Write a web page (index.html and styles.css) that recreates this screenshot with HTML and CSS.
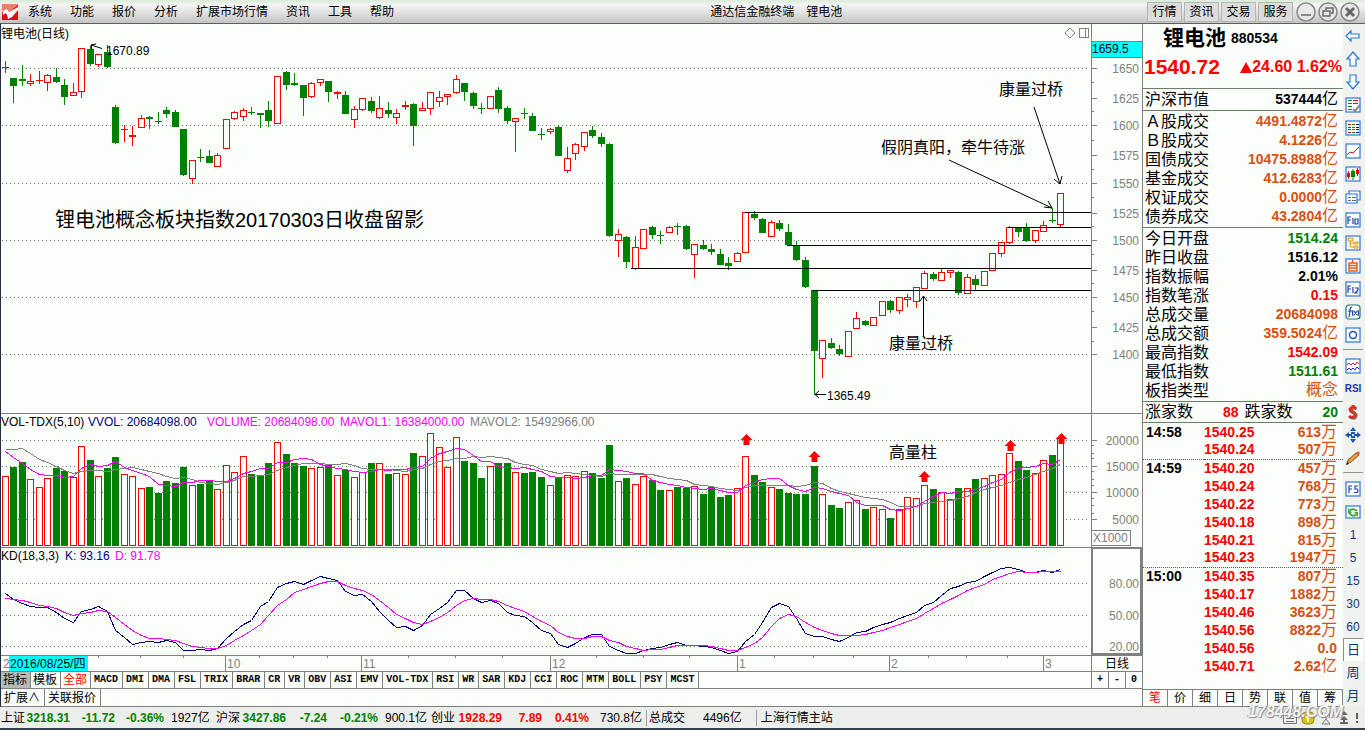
FILE: index.html
```html
<!DOCTYPE html>
<html lang="zh-CN">
<head>
<meta charset="utf-8">
<title>通达信金融终端 锂电池</title>
<link rel="stylesheet" href="styles.css">
</head>
<body>
<header class="menubar">
  <svg class="logo" width="16" height="16" viewBox="0 0 16 16"><rect width="16" height="16" fill="#e8836c"/><path d="M0 9L5 5L7 8L16 1V16H0Z" fill="#e01010"/><path d="M1 7L5 5L7 8L16 3V6L10 13L6 15L5 10L1 12Z" fill="#fff"/><path d="M1 11L4 9V15H1Z" fill="#e01010"/></svg>
  <nav class="menu">
    <button>系统</button><button>功能</button><button>报价</button><button>分析</button><button>扩展市场行情</button><button>资讯</button><button>工具</button><button>帮助</button>
  </nav>
  <div class="app-title"><span>通达信金融终端</span><span>锂电池</span></div>
  <div class="top-buttons"><button>行情</button><button>资讯</button><button>交易</button><button>服务</button></div>
  <div class="window-buttons">
    <button aria-label="最小化"><svg width="20" height="20" viewBox="0 0 20 20"><circle cx="10" cy="10" r="9" class="ring"/><path d="M5 13H15" class="mark"/></svg></button>
    <button aria-label="还原"><svg width="20" height="20" viewBox="0 0 20 20"><circle cx="10" cy="10" r="9" class="ring"/><path d="M8 8V6H15V11H13M5 9H12V14H5Z" class="mark"/></svg></button>
    <button aria-label="关闭"><svg width="20" height="20" viewBox="0 0 20 20"><circle cx="10" cy="10" r="9" class="ring"/><path d="M6 6L14 14M14 6L6 14" class="mark cross"/></svg></button>
  </div>
</header>

<main class="workspace">
  <section class="charts">
    <div class="pane pane-price">
      <svg class="plot" id="price"><g transform="translate(-1,-24)">
        <g id="price-grid"></g>
        <text x="1" y="38">锂电池(日线)</text>
        <path class="tool" d="M1070 28L1075 33L1070 38L1065 33Z"/>
        <path class="tool crisp" d="M1079.5 28.5H1088.5V37.5H1079.5ZM1085.5 28V38"/>
        <g id="candles"></g>
        <path class="ray" d="M745 212.5H1092M1008 227.5H1092M787 245.5H1092M631 268.5H1092M813 290.5H1092"/>
        <path class="arrow" d="M102 48.5L91 45M96 44L91 45L92 50"/>
        <text x="106" y="55">1670.89</text>
        <path class="arrow" d="M826 394.5H815M819 391L815 394.5L819 398"/>
        <text x="827" y="400">1365.49</text>
        <path class="arrow" d="M1034 107L1060 184M1054 179L1060 184L1062 176"/>
        <path class="arrow" d="M949 160L1052 208M1048 201L1052 208L1044 207"/>
        <path class="arrow" d="M923.5 337V296M920 301L923.5 296L927 301"/>
        <text class="note" x="999" y="95">康量过桥</text>
        <text class="note" x="881" y="153">假阴真阳，牵牛待涨</text>
        <text class="note" x="889" y="349">康量过桥</text>
        <text class="headline" x="55" y="227">锂电池概念板块指数20170303日收盘留影</text>
      </g></svg>
      <svg class="axis" id="price-axis"><g transform="translate(-1091,-24)">
        <path d="M1091.5 24V414" class="frame"/>
        <rect x="1092" y="41" width="50" height="16" fill="#00ffff"/><path d="M1092 41.5H1142M1092 57.5H1142" class="frame"/>
        <text x="1092" y="53" class="dark">1659.5</text>
        <g id="price-ticks"></g>
      </g></svg>
    </div>
    <div class="pane pane-volume">
      <svg class="plot" id="volume"><g transform="translate(-1,-414)">
        <g id="volume-grid"></g>
        <text x="1" y="426">VOL-TDX(5,10)</text><text x="88" y="426" class="navy">VVOL: 20684098.00</text><text x="207" y="426" class="magenta">VOLUME: 20684098.00</text><text x="340" y="426" class="magenta">MAVOL1: 16384000.00</text><text x="470" y="426" class="grey">MAVOL2: 15492966.00</text>
        <g id="bars"></g>
        <g id="volume-lines"></g>
        <g id="flags"></g>
        <text class="note" x="889" y="458">高量柱</text>
      </g></svg>
      <svg class="axis"><g transform="translate(-1091,-414)">
        <path d="M1091.5 414V547M1092 530.5H1130.5V545.5H1092" class="frame"/>
        <g id="volume-ticks"></g>
        <text x="1093" y="542">X1000</text>
      </g></svg>
    </div>
    <div class="pane pane-kd">
      <svg class="plot" id="kd"><g transform="translate(-1,-548)">
        <g id="kd-grid"></g>
        <text x="1" y="560">KD(18,3,3)</text><text x="65" y="560" class="navy">K: 93.16</text><text x="115" y="560" class="magenta">D: 91.78</text>
        <g id="kd-lines"></g>
      </g></svg>
      <svg class="axis"><g transform="translate(-1091,-548)">
        <rect x="1092" y="548" width="49" height="106" fill="none" stroke="#808080" stroke-width="2"/>
        <g id="kd-ticks"></g>
      </g></svg>
    </div>
    <div class="pane pane-dates">
      <svg class="plot"><g transform="translate(-1,-656)">
        <text x="3" y="668" class="grey">2</text>
        <rect x="9" y="656" width="79" height="15" fill="#00ffff"/><text x="10" y="668">2016/08/25/四</text>
        <g id="months"></g>
      </g></svg>
      <button class="period">日线</button>
    </div>
    <div class="tabs tabs-indicator">
      <button class="cn selected">指标</button><button class="cn">模板</button><button class="cn hot">全部</button><button>MACD</button><button>DMI</button><button>DMA</button><button>FSL</button><button>TRIX</button><button>BRAR</button><button>CR</button><button>VR</button><button>OBV</button><button>ASI</button><button>EMV</button><button>VOL-TDX</button><button>RSI</button><button>WR</button><button>SAR</button><button>KDJ</button><button>CCI</button><button>ROC</button><button>MTM</button><button>BOLL</button><button>PSY</button><button>MCST</button>
      <span class="zoomers"><button>+</button><button>-</button><button>0</button></span>
    </div>
    <div class="tabs tabs-extra"><button class="cn">扩展∧</button><button class="cn">关联报价</button></div>
  </section>

  <aside class="quote">
    <div class="quote-head">
      <h1><span class="name">锂电池</span><span class="code">880534</span></h1>
      <p><span class="last">1540.72</span><span class="change"><svg width="12" height="11" viewBox="0 0 12 11"><path d="M6 0L12 11H0Z" fill="#f00"/></svg>24.60 1.62%</span></p>
    </div>
    <table class="facts single"><tr><th>沪深市值</th><td>537444<i>亿</i></td></tr></table>
    <table class="facts">
      <tr><th>Ａ股成交</th><td class="orange">4491.4872<i>亿</i></td></tr>
      <tr><th>Ｂ股成交</th><td class="orange">4.1226<i>亿</i></td></tr>
      <tr><th>国债成交</th><td class="orange">10475.8988<i>亿</i></td></tr>
      <tr><th>基金成交</th><td class="orange">412.6283<i>亿</i></td></tr>
      <tr><th>权证成交</th><td class="orange">0.0000<i>亿</i></td></tr>
      <tr><th>债券成交</th><td class="orange">43.2804<i>亿</i></td></tr>
    </table>
    <table class="facts">
      <tr><th>今日开盘</th><td class="green">1514.24</td></tr>
      <tr><th>昨日收盘</th><td>1516.12</td></tr>
      <tr><th>指数振幅</th><td>2.01%</td></tr>
      <tr><th>指数笔涨</th><td class="red">0.15</td></tr>
      <tr><th>总成交量</th><td class="orange">20684098</td></tr>
      <tr><th>总成交额</th><td class="orange">359.5024<i>亿</i></td></tr>
      <tr><th>最高指数</th><td class="red">1542.09</td></tr>
      <tr><th>最低指数</th><td class="green">1511.61</td></tr>
      <tr><th>板指类型</th><td class="orange"><i>概念</i></td></tr>
    </table>
    <div class="breadth"><span>涨家数</span><b class="red">88</b><span>跌家数</span><b class="green">20</b></div>
    <table class="ticks">
      <tr><td>14:58</td><td>1540.25</td><td>613<i>万</i></td></tr>
      <tr><td></td><td>1540.24</td><td>507<i>万</i></td></tr>
      <tr class="minute"><td>14:59</td><td>1540.20</td><td>457<i>万</i></td></tr>
      <tr><td></td><td>1540.24</td><td>768<i>万</i></td></tr>
      <tr><td></td><td>1540.22</td><td>773<i>万</i></td></tr>
      <tr><td></td><td>1540.18</td><td>898<i>万</i></td></tr>
      <tr><td></td><td>1540.21</td><td>815<i>万</i></td></tr>
      <tr><td></td><td>1540.23</td><td>1947<i>万</i></td></tr>
      <tr class="minute"><td>15:00</td><td>1540.35</td><td>807<i>万</i></td></tr>
      <tr><td></td><td>1540.17</td><td>1882<i>万</i></td></tr>
      <tr><td></td><td>1540.46</td><td>3623<i>万</i></td></tr>
      <tr><td></td><td>1540.56</td><td>8822<i>万</i></td></tr>
      <tr><td></td><td>1540.56</td><td>0.0</td></tr>
      <tr><td></td><td>1540.71</td><td>2.62<i>亿</i></td></tr>
    </table>
    <div class="quote-tabs"><button class="hot">笔</button><button>价</button><button>细</button><button>日</button><button>势</button><button>联</button><button>值</button><button>筹</button></div>
  </aside>

  <nav class="toolbar">
    <button aria-label="后退"><svg viewBox="0 0 16 16"><path class="hollow" d="M1 8L6 3V6H14V10H6V13Z"/></svg></button>
    <button aria-label="上"><svg viewBox="0 0 16 16"><path class="hollow" d="M8 1L14 8H11V15H5V8H2Z"/></svg></button>
    <button aria-label="下"><svg viewBox="0 0 16 16"><path class="hollow" d="M8 15L2 8H5V1H11V8H14Z"/></svg></button>
    <button aria-label="自选报价"><svg viewBox="0 0 16 16"><rect class="box" x="1" y="1" width="14" height="14"/><path stroke="#080" d="M3 3.5H7M3 6.5H7M3 9.5H7M3 12.5H7"/><path stroke="#e00" d="M8 3.5H13M8 6.5H13"/><path stroke="#888" stroke-width="2" fill="none" d="M8 12L10 14L15 8"/></svg></button>
    <button aria-label="行情表"><svg viewBox="0 0 16 16"><rect class="box" x="1" y="1" width="14" height="14"/><path stroke="#e00" d="M3 4.5H6M3 7.5H6M3 9.5H6M3 12.5H6"/><path stroke="#080" d="M7 4.5H10M7 7.5H10M7 9.5H10M7 12.5H10"/><path stroke="#00d" d="M11 4.5H14M11 7.5H14M11 9.5H14M11 12.5H14"/></svg></button>
    <button aria-label="分时"><svg viewBox="0 0 16 16"><rect class="box" x="1" y="1" width="14" height="14"/><path fill="none" stroke="#e00" d="M2 12L5 9L8 10L11 7L14 4"/></svg></button>
    <button aria-label="K线"><svg viewBox="0 0 16 16"><rect class="box" x="1" y="1" width="14" height="14"/><path fill="#e00" d="M2 7H5V11H2ZM11 4H14V8H11ZM3 5H4V13H3ZM12 2H13V10H12Z"/><path fill="#080" d="M6 5H10V11H6ZM7.5 3H8.5V14H7.5Z"/></svg></button>
    <button aria-label="多窗口"><svg viewBox="0 0 16 16"><path class="box" d="M4 5V2H15V11H12M1 5H12V14H1Z"/><path stroke="#666" d="M3 8.5H6M7 8.5H11M3 11.5H6M7 11.5H11"/></svg></button>
    <button aria-label="F10"><svg viewBox="0 0 16 16"><rect class="box" x="1" y="1" width="14" height="14"/><path class="fn" d="M3 12V5H6M3 8H6M8 6V12M10 7H13V12H10Z"/></svg></button>
    <button aria-label="板块树"><svg viewBox="0 0 16 16"><rect class="box" x="1" y="1" width="14" height="14"/><path fill="#fff2a0" stroke="#d89820" d="M3 3H8V6H3ZM9 7H13V9H9ZM9 11H13V13H9ZM5 6V12H9M5 8H9"/></svg></button>
    <button aria-label="自选股"><svg viewBox="0 0 16 16"><rect class="box" x="1" y="1" width="14" height="14"/><path fill="none" stroke="#e06020" stroke-width="1.5" d="M4 5H12V13H4ZM4 7.5H12M4 10H12M8 2L7 5"/></svg></button>
    <button aria-label="F12"><svg viewBox="0 0 16 16"><rect class="box" x="1" y="1" width="14" height="14"/><path class="fn" d="M3 12V5H6M3 8H6M8 6V12M10 7H13V9L10 12H13"/></svg></button>
    <button aria-label="公式"><svg viewBox="0 0 16 16"><rect class="box teal" x="1" y="1" width="14" height="14" rx="3"/><path class="fn" d="M7 3C5 3 5 5 5 7L4 13M3 7H7M8 6Q7 9 8 12M9 7L12 11M12 7L9 11M13 6Q14 9 13 12"/></svg></button>
    <button aria-label="周期"><svg viewBox="0 0 16 16"><rect class="box" x="1" y="1" width="14" height="14"/><circle cx="8" cy="8" r="3.5" fill="none" stroke="#1850c0" stroke-width="1.4"/></svg></button>
    <hr>
    <button aria-label="叠加"><svg viewBox="0 0 16 16"><rect class="box" x="1" y="1" width="14" height="14"/><path fill="none" stroke="#d22" d="M2 7L4 5L6 7L8 5L10 7L12 4L14 6"/><path fill="none" stroke="#22d" d="M2 12L4 10L6 12L8 10L10 12L12 9L14 11"/></svg></button>
    <button class="rsi">RSI</button>
    <button aria-label="资金"><svg viewBox="0 0 16 16"><path fill="none" stroke="#888" stroke-width="3" d="M12 5Q8 3 6 6Q6 8 9 9Q13 11 10 14Q7 15 5 13"/><path fill="none" stroke="#d43020" stroke-width="3" d="M11 4Q7 2 5 5Q5 7 8 8Q12 10 9 13Q6 14 4 12M8 1V4"/></svg></button>
    <button aria-label="移动"><svg viewBox="0 0 16 16"><path fill="#1858b8" d="M8 0L11 4H5ZM8 16L5 12H11ZM0 8L4 5V11ZM16 8L12 11V5ZM6 5H10V7H12V9H10V11H6V9H4V7H6Z"/><path fill="#fff" d="M7 7H9V9H7Z"/></svg></button>
    <button aria-label="画线"><svg viewBox="0 0 16 16"><path fill="#e8a040" stroke="#805018" d="M2 14L3 10L11 3L14 5L6 12Z"/><path fill="#e06050" d="M11 3L13 1L15 3L14 5Z"/><path fill="#222" d="M1 15L2 12L4 14Z"/></svg></button>
    <hr>
    <button aria-label="F5"><svg viewBox="0 0 16 16"><rect class="box" x="1" y="1" width="14" height="14"/><path class="fn" d="M4 12V5H7M4 8H7M13 5H10V8H12Q14 10 12 11.5H9"/></svg></button>
    <button aria-label="刷新"><svg viewBox="0 0 16 16"><rect class="box" x="1" y="2" width="14" height="12"/><path fill="none" stroke="#40a840" stroke-width="2" d="M12 7Q9 4 5 6M4 9Q7 13 11 11"/><path fill="#40a840" d="M3 4V9H7ZM13 13V8H9Z"/></svg></button>
    <button>1</button><button>5</button><button>15</button><button>30</button><button>60</button><button class="cn active">日</button><button class="cn">周</button><button class="cn">月</button>
  </nav>
</main>

<footer class="status">
  <div class="index sh down"><span>上证</span><b>3218.31</b><b>-11.72</b><b>-0.36%</b><span>1927亿</span></div>
  <div class="index hs down"><span>沪深</span><b>3427.86</b><b>-7.24</b><b>-0.21%</b><span>900.1亿</span></div>
  <div class="index cy up"><span>创业</span><b>1928.29</b><b>7.89</b><b>0.41%</b><span>730.8亿</span></div>
  <div class="total"><span>总成交</span><span>4496亿</span></div>
  <div class="host">上海行情主站</div>
  <div class="tray">
    <svg width="80" height="16" viewBox="0 0 80 16"><path fill="#eee" stroke="#777" d="M.5 2.5H13.5V13.5H.5ZM3 5.5H11M3 8.5H11M3 11.5H11"/><rect x="19" y="2" width="12" height="12" rx="4" fill="#d8c020" stroke="#988810"/><path fill="#fff8a0" d="M25 4L29 8H26V12H24V8H21Z"/><path fill="none" stroke="#777" d="M43 5V9L39 14H47L43 9M40 2Q38 5 40 8M46 2Q48 5 46 8"/><path fill="#666" d="M61 1L65 5H57ZM61 6L65 10H57ZM60 10H62V12H65V14H57V12H60ZM73 3H75V9H73ZM73 11H75V13H73Z"/></svg>
    <span class="stamp">178448.COM</span>
  </div>
</footer>
<script src="chart.js"></script>
</body>
</html>
```

FILE: styles.css
```css
* { box-sizing: border-box; }
body {
  margin: 0;
  min-height: 100vh;
  display: flex;
  flex-direction: column;
  background: #fcfefc;
  color: #000;
  font: 12px/16px "Liberation Sans", "Noto Sans CJK SC", sans-serif;
}
button {
  margin: 0;
  padding: 0;
  border: 0;
  background: none;
  color: inherit;
  font: inherit;
  white-space: nowrap;
}
svg { display: block; flex: none; }

/* menu bar */
.menubar {
  display: flex;
  align-items: center;
  height: 24px;
  padding-left: 2px;
  border-bottom: 1px solid #605c60;
  background: linear-gradient(#d8ecd8, #f4f4f4 20%, #e4e4e4 50%, #c4c4c4);
}
.menu { display: flex; gap: 18px; margin-left: 10px; }
.app-title { display: flex; gap: 12px; margin: 0 auto 0 316px; }
.top-buttons { display: flex; gap: 2px; }
.top-buttons button {
  width: 35px;
  height: 20px;
  border: 1px solid #b4b4b4;
  background: #dcdcdc;
}
.window-buttons { display: flex; gap: 2px; padding: 0 5px 0 3px; }
.ring { fill: #e8e8e8; stroke: #888; stroke-width: 1.5; }
.mark { fill: none; stroke: #666; stroke-width: 1.5; }
.cross { stroke-width: 3; }

/* workspace */
.workspace { flex: 1; display: flex; }
.charts {
  flex: 1;
  min-width: 0;
  display: flex;
  flex-direction: column;
  border-left: 1px solid #203040;
}
.pane { display: flex; border-bottom: 1px solid #808080; }
.pane-price { flex: 1; min-height: 390px; }
.pane-volume { height: 134px; }
.pane-kd { height: 108px; }
.pane-dates { height: 16px; }
.plot { flex: 1; min-width: 0; height: 100%; overflow: hidden; }
.axis { width: 51px; height: 100%; }
.axis text, .grey { fill: #808080; }
.axis .dark { fill: #000; }
.navy { fill: #000080; }
.magenta { fill: #ff00ff; }
.crisp, .frame, .ray, .grid, .body, .wick { shape-rendering: crispEdges; }
.frame { fill: none; stroke: #808080; }
.tool { fill: none; stroke: #808080; }
.ray { stroke: #000; }
.grid { stroke: #688068; stroke-dasharray: 1 3; }
.arrow { fill: none; stroke: #000; }
.note { font-size: 16px; }
.headline { font-size: 20px; }
.up-bar { fill: #fcfefc; stroke: #f00; }
.down-bar { fill: #008000; stroke: #008000; }
.line { fill: none; stroke-width: 1; }
.flag { fill: #f00; }
.period { width: 51px; border-left: 1px solid #808080; }
.tabs { display: flex; border-bottom: 1px solid #808080; }
.tabs-indicator { height: 17px; font: bold 10px/16px "Liberation Mono", monospace; }
.tabs-extra { height: 18px; }
.tabs button { padding: 0 4px 0 3px; border-right: 1px solid #808080; }
.tabs .cn {
  padding: 0 3px 0 2px;
  font: 12px/16px "Liberation Sans", "Noto Sans CJK SC", sans-serif;
}
.tabs .selected { background: #b8b8b8; }
.tabs-extra .cn { padding: 0 4px 0 3px; }
.hot { color: #f00; }
.zoomers { display: flex; width: 51px; margin-left: auto; border-left: 1px solid #808080; }
.zoomers button { flex: 1; padding: 0; }
.zoomers button:last-child { border: 0; }

/* quote panel */
.quote {
  flex: none;
  width: 201px;
  display: flex;
  flex-direction: column;
  border-left: 1px solid #808080;
  border-bottom: 1px solid #808080;
}
.quote-head { height: 65px; border-bottom: 1px solid #688068; white-space: nowrap; }
.quote-head h1 {
  display: flex;
  align-items: center;
  gap: 5px;
  margin: 0;
  padding-left: 20px;
  line-height: 28px;
}
.name { font-size: 21px; font-weight: bold; }
.code { font-size: 14px; }
.quote-head p {
  display: flex;
  align-items: center;
  justify-content: space-between;
  margin: 2px 0 0;
  padding: 0 1px;
  color: #f00;
  font-weight: bold;
  line-height: 26px;
}
.last { font-size: 21px; }
.change { display: flex; align-items: center; font-size: 16px; }
.facts, .ticks { width: 100%; border-collapse: collapse; font-size: 14px; }
.facts { display: block; padding: 1px 0; border-bottom: 1px solid #688068; }
.facts tbody { display: block; }
.facts tr { display: flex; justify-content: space-between; padding: 0 5px 0 2px; }
.facts th, .facts td { padding: 0; line-height: 19px; white-space: nowrap; }
.facts th { font-size: 16px; font-weight: normal; }
.facts td, .ticks td { font-weight: bold; }
i { font-size: 16px; font-style: normal; font-weight: normal; line-height: 16px; }
.red { color: #f00; }
.green { color: #008000; }
.orange { color: #d85010; }
.breadth {
  display: flex;
  justify-content: space-between;
  padding: 0 5px 0 2px;
  border-bottom: 1px solid #688068;
  font-size: 16px;
  line-height: 20px;
}
.breadth b { font-size: 14px; }
.breadth .red { margin-left: 24px; }
.breadth .green { margin-left: 24px; }
.ticks td { height: 18px; padding: 0; line-height: 17px; white-space: nowrap; }
.ticks td:first-child { width: 61px; padding-left: 3px; }
.ticks td:nth-child(2) { color: #f00; }
.ticks td:last-child { padding-right: 6px; color: #d85010; text-align: right; }
.minute { border-top: 1px dotted #506050; }
.quote-tabs { display: flex; height: 17px; margin-top: auto; border-top: 1px solid #808080; }
.quote-tabs button { flex: 1; border-right: 1px solid #808080; line-height: 16px; }

/* right toolbar */
.toolbar {
  flex: none;
  width: 22px;
  display: flex;
  flex-direction: column;
  background: #f0f2f0;
}
.toolbar button {
  display: flex;
  align-items: center;
  justify-content: center;
  width: 20px;
  height: 23px;
  color: #103878;
}
.toolbar svg { width: 16px; height: 16px; }
.toolbar hr { width: 20px; margin: 3px 0 4px; border: 0; border-top: 1px solid #909090; }
.toolbar .rsi { color: #2038b0; font-size: 10px; font-weight: bold; }
.toolbar .cn { font-size: 13px; }
.toolbar .active { border: 1px solid #909090; border-width: 1px 0 0 1px; background: #fcfefc; }
.hollow { fill: #fff; stroke: #2878d8; stroke-width: 1.2; }
.box { fill: #fff; stroke: #2878d8; stroke-width: 1.2; }
.teal { stroke: #187078; }
.fn { fill: none; stroke: #1840b0; stroke-width: 1.2; }

/* status bar */
.status {
  display: flex;
  align-items: center;
  height: 23px;
  border-bottom: 2px solid #304050;
  background: #eceeec;
  white-space: nowrap;
}
.index { display: grid; padding-left: 1px; }
.sh { grid-template-columns: 24px 45px 45px 49px 51px; }
.hs { grid-template-columns: 24px 46px 41px 51px 52px; }
.cy { grid-template-columns: 24px 47px 40px 47px 57px; }
.index b { text-align: right; }
.index span:last-child { padding-left: 7px; }
.cy span:last-child { padding-left: 11px; }
.down b { color: #008000; }
.up b { color: #f00; }
.total { display: flex; gap: 18px; padding: 0 14px 0 2px; border-left: 1px solid #a0a0a0; }
.host { padding-left: 4px; border-left: 1px solid #a0a0a0; }
.tray { position: relative; margin-left: auto; padding-right: 2px; }
.stamp {
  position: absolute;
  right: 22px;
  bottom: 3px;
  color: #f4f4f4;
  font: italic bold 16px/22px "Liberation Sans", sans-serif;
  text-shadow: 1px 1px 1px #888, -1px 0 1px #aaa;
}
```

FILE: chart.js
```js
const NS = 'http://www.w3.org/2000/svg';
const STEP = 8.516;

// one candle per row: direction, high, top, bottom, low, volume top
const CANDLES = `
r 61 67 67 72 476;g 78 78 85 102 467;g 65 79 80 85 462;r 74 81 83 85 479;r 71 80 80 83 487
r 74 75 82 90 478;g 68 77 81 82 468;g 79 85 96 104 471;r 83 92 95 95 477;r 48 48 91 97 446
g 46 49 63 65 460;r 54 54 64 66 476;g 45 52 66 67 468;g 105 107 142 143 457;r 125 129 129 141 474
r 126 135 136 145 476;r 115 118 127 127 488;g 116 117 118 128 487;g 112 121 121 123 493;g 107 110 113 117 481
g 110 112 126 126 483;g 129 129 174 175 467;r 160 160 178 183 485;g 149 157 157 161 484;g 150 156 162 162 481
r 153 155 166 166 489;r 119 119 148 148 465;r 111 112 118 119 472;r 108 110 116 120 456;g 107 112 112 114 474
g 113 113 114 127 475;g 101 110 120 126 463;r 76 76 123 123 442;g 71 72 84 89 454;g 73 83 84 85 463
g 85 85 97 115 466;r 82 83 96 97 468;r 79 79 82 85 467;g 81 81 91 101 464;r 91 92 93 98 475
g 91 95 113 113 470;r 106 109 119 127 477;r 98 98 109 110 472;g 97 101 110 112 463;r 96 108 117 118 463
g 102 110 113 117 474;r 109 113 117 123 473;r 101 105 106 109 474;g 103 104 125 145 453;r 102 108 110 110 456
r 92 92 108 114 433;r 91 97 101 106 447;r 94 94 96 104 467;r 75 79 92 93 437;g 83 83 91 100 461
g 92 93 105 108 463;g 103 108 108 113 478;r 96 96 108 108 466;g 87 90 108 112 463;g 106 108 120 123 463
r 118 118 121 151 472;g 108 113 113 118 473;g 113 116 130 130 472;g 128 134 134 139 477;r 128 129 131 133 485
g 125 127 155 155 478;r 147 158 170 172 475;r 143 144 153 159 476;r 132 132 146 150 471;g 126 130 135 137 473
g 133 137 143 146 478;g 143 144 235 236 445;r 229 234 240 256 481;g 236 237 261 267 478;r 236 247 268 269 484
r 229 229 248 248 476;g 226 227 234 238 480;g 231 235 235 243 490;r 226 227 232 232 490;g 223 226 226 234 487
g 225 226 248 249 488;r 244 244 254 277 486;g 240 245 248 249 494;g 244 249 251 254 487;g 249 254 264 264 497
g 257 263 265 269 495;r 252 253 261 261 488;r 212 212 252 252 456;g 211 214 217 219 475;g 218 219 232 232 482
r 220 222 236 236 487;g 220 223 228 230 489;g 224 232 244 245 493;g 241 245 259 260 494;g 257 260 286 287 494
g 290 290 350 394 466;r 340 340 358 377 494;g 338 343 347 348 505;g 345 349 353 355 508;r 331 331 356 356 502
r 312 318 328 328 500;g 320 321 324 325 509;r 317 317 325 325 507;r 301 301 315 315 509;g 300 301 309 312 518
r 297 297 310 313 509;r 294 297 299 306 497;r 287 287 301 307 498;r 271 273 288 288 485;g 272 274 278 280 489
r 269 272 280 280 492;r 270 270 272 277 499;g 271 272 292 294 488;r 274 277 293 293 488;g 275 279 284 290 479
r 271 271 285 285 478;r 253 253 270 270 475;r 242 242 253 256 474;r 226 227 242 243 453;g 227 228 231 236 461
g 223 228 240 241 470;r 230 230 240 242 473;r 221 225 231 231 460;g 208 220 220 222 455;r 193 193 224 226 438`
  .trim().split(/[;\n]/).map(row => {
    const [dir, ...v] = row.split(' ');
    return [dir, ...v.map(Number)];
  });

const K = [593,599,603,606,607,607,612,618,622,611,609,606,611,630,637,644,642,641,642,640,642,650,650,649,650,648,638,631,624,620,606,601,587,583,581,584,580,576,578,580,591,595,594,601,611,620,627,626,630,625,614,608,602,590,590,598,602,600,603,612,615,616,622,630,633,644,
  647,643,637,634,634,646,650,653,653,650,648,647,644,642,645,645,646,647,650,653,651,641,634,622,607,603,606,618,633,636,636,639,641,637,632,631,627,624,622,618,615,612,605,602,595,588,586,582,581,576,572,568,567,569,572,572,570,572,569];
const D = [598,599,600,602,605,606,608,612,615,613,612,610,611,617,624,630,635,638,638,639,640,643,646,647,648,648,645,640,635,630,624,615,605,599,592,589,586,583,581,581,585,588,590,594,600,607,614,618,622,624,621,617,612,605,600,598,599,599,601,605,608,611,616,621,625,632,
  636,638,638,636,636,640,642,646,648,650,649,649,647,645,645,645,645,646,648,650,650,647,643,637,626,618,614,616,622,627,630,633,635,635,635,634,632,630,627,624,621,618,613,608,603,599,595,590,587,584,579,576,573,571,572,572,571,571,571];

function add(id, tag, attrs, text) {
  const el = document.createElementNS(NS, tag);
  for (const key in attrs) el.setAttribute(key, attrs[key]);
  if (text) el.textContent = text;
  document.getElementById(id).appendChild(el);
}
const column = i => Math.floor(5 + STEP * i);

function bar(id, dir, x, top, bottom) {
  const cls = (dir === 'r' ? 'up-bar' : 'down-bar') + ' body';
  if (top === bottom) {
    // open equals close: a single horizontal stroke
    add(id, 'path', { class: cls, d: `M${x - 3} ${top + 0.5}h7` });
    return;
  }
  add(id, 'rect', { class: cls, x: x - 2.5, y: top + 0.5, width: 6, height: bottom - top });
}
function grid(id, rows) {
  rows.forEach(y => add(id, 'line', { class: 'grid', x1: 2, x2: '100%', y1: y + 0.5, y2: y + 0.5 }));
}
function line(id, values, color) {
  const points = values.map((y, i) => `${column(i) + 0.5},${Math.round(y) + 0.5}`).join(' ');
  add(id, 'polyline', { class: 'line crisp', points, stroke: color });
}
function scale(id, labels, minor) {
  labels.forEach(([y, text]) => {
    add(id, 'path', { class: 'frame', d: `M1092 ${y + 0.5}h5` });
    add(id, 'text', { x: 1139, y: y + 5, 'text-anchor': 'end' }, text);
  });
  minor.forEach(y => add(id, 'path', { class: 'frame', d: `M1092 ${y + 0.5}h2` }));
}
function average(values, n, head) {
  return values.map((v, i) => i < head.length
    ? head[i]
    : values.slice(i - n + 1, i + 1).reduce((a, b) => a + b) / n);
}

grid('price-grid', [68, 125, 183, 240, 297, 354]);
grid('volume-grid', [440, 466, 492, 519]);
grid('kd-grid', [583, 615, 646]);

CANDLES.forEach(([dir, high, top, bottom, low, vol], i) => {
  const x = column(i);
  add('candles', 'line', { stroke: dir === 'r' ? '#f00' : '#008000', class: 'wick', x1: x + 0.5, x2: x + 0.5, y1: high, y2: low + 1 });
  bar('candles', dir, x, top, bottom);
  bar('bars', dir, x, vol, 545);
});

const volumes = CANDLES.map(c => c[5]);
line('volume-lines', average(volumes, 10, [449, 449, 448, 453, 459, 462, 466, 470, 473]), '#808080');
line('volume-lines', average(volumes, 5, [451, 457, 463, 469]), '#ff00ff');
line('kd-lines', K, '#000080');
line('kd-lines', D, '#ff00ff');

[[746, 434], [814, 451], [924, 471], [1010, 440], [1061, 433]].forEach(([x, y]) =>
  add('flags', 'path', { class: 'flag', d: `M${x + 0.5} ${y}l6 6h-3v5h-6v-5h-3z` }));

scale('price-ticks', [[68, '1650'], [98, '1625'], [125, '1600'], [155, '1575'], [183, '1550'], [213, '1525'],
  [240, '1500'], [270, '1475'], [297, '1450'], [327, '1425'], [354, '1400']],
  [82, 111, 140, 169, 197, 226, 254, 283, 311, 341]);
scale('volume-ticks', [[440, '20000'], [466, '15000'], [492, '10000'], [519, '5000']],
  [445, 453, 458, 471, 479, 485, 498, 505, 513]);
[[583, '80.00'], [615, '50.00'], [646, '20.00']].forEach(([y, t]) =>
  add('kd-ticks', 'text', { x: 1139, y: y + 5, 'text-anchor': 'end' }, t));

[[225, '10'], [361, '11'], [550, '12'], [737, '1'], [889, '2'], [1043, '3']].forEach(([x, t]) => {
  add('months', 'path', { class: 'frame', d: `M${x + 0.5} 656v15` });
  add('months', 'text', { class: 'grey', x: x + 2, y: 668 }, t);
});
[98, 140, 183, 259, 293, 327, 408, 455, 502, 596, 643, 689, 774, 813, 853, 928, 966, 1007].forEach(x =>
  add('months', 'path', { class: 'frame', d: `M${x + 0.5} 656v2` }));
```
